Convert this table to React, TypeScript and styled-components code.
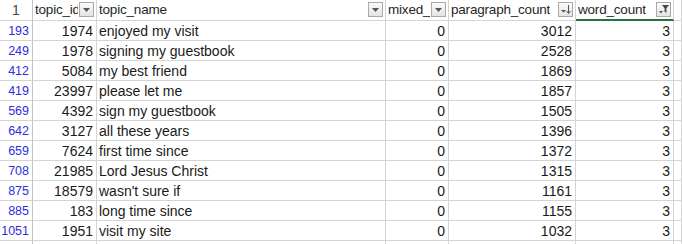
import styled, { createGlobalStyle } from 'styled-components'

const GlobalStyle = createGlobalStyle`
  html, body {
    margin: 0;
    padding: 0;
    background: #ffffff;
  }
  body {
    font-family: "Liberation Sans", Arial, sans-serif;
    overflow: hidden;
  }
`

const Sheet = styled.div`
  display: grid;
  grid-template-columns: 33px 64px 289px 63px 127px 98px 1fr;
  grid-auto-rows: 20px;
  grid-template-rows: 21px;
  width: 682px;
  height: 244px;
  overflow: hidden;
  font-size: 14px;
  color: #1a1a1a;
`

const Cell = styled.div<{ $align?: 'left' | 'right' }>`
  position: relative;
  box-sizing: border-box;
  border-right: 1px solid #d4d4d4;
  border-bottom: 1px solid #d4d4d4;
  padding: 0 3px 0 2px;
  display: flex;
  align-items: center;
  justify-content: ${(p) => (p.$align === 'right' ? 'flex-end' : 'flex-start')};
  white-space: nowrap;
  overflow: hidden;
`

const RowNum = styled(Cell)<{ $head?: boolean }>`
  border-right-color: #c4c4c4;
  color: ${(p) => (p.$head ? '#444444' : '#2e2ee0')};
  font-size: ${(p) => (p.$head ? '14px' : '12.5px')};
  justify-content: ${(p) => (p.$head ? 'center' : 'flex-end')};
  padding: 0 ${(p) => (p.$head ? '0' : '3px')} 0 0;
`

const HeadCell = styled(Cell)<{ $active?: boolean }>`
  color: #262626;
  font-size: 13.5px;
  letter-spacing: -0.2px;
  padding-right: 0;
  ${(p) => p.$active && `border-bottom: 2px solid #217346;`}
`

const HeadText = styled.span`
  overflow: hidden;
  max-width: calc(100% - 18px);
  padding-bottom: 1px;
`

const FilterBtn = styled.span`
  position: absolute;
  right: 2px;
  top: 2px;
  width: 15px;
  height: 15px;
  box-sizing: border-box;
  border: 1px solid #a9a9a9;
  background: linear-gradient(#fbfbfb, #e3e3e3);
  display: flex;
  align-items: center;
  justify-content: center;
`

type Kind = 'plain' | 'sort' | 'filter'

function FilterIcon({ kind }: { kind: Kind }) {
  if (kind === 'sort') {
    return (
      <svg width="13" height="13" viewBox="0 0 13 13">
        <path d="M2 7h5l-2.5 2.5z" fill="#555" />
        <path d="M9.5 2v8" stroke="#555" strokeWidth="1" />
        <path d="M7.5 8l2 2.5 2-2.5" stroke="#555" strokeWidth="1" fill="none" />
      </svg>
    )
  }
  if (kind === 'filter') {
    return (
      <svg width="13" height="13" viewBox="0 0 13 13">
        <path d="M2 8h4l-2 2.5z" fill="#555" />
        <path d="M5 2h7l-2.6 3.2v4.6l-1.8-1v-3.6z" fill="#444" />
      </svg>
    )
  }
  return (
    <svg width="13" height="13" viewBox="0 0 13 13">
      <path d="M3 5h7l-3.5 4z" fill="#555" />
    </svg>
  )
}

const headers: { label: string; kind: Kind; active?: boolean }[] = [
  { label: 'topic_id', kind: 'plain' },
  { label: 'topic_name', kind: 'plain' },
  { label: 'mixed_case', kind: 'plain' },
  { label: 'paragraph_count', kind: 'sort' },
  { label: 'word_count', kind: 'filter', active: true },
]

const rows: [number, number, string, number, number, number][] = [
  [193, 1974, 'enjoyed my visit', 0, 3012, 3],
  [249, 1978, 'signing my guestbook', 0, 2528, 3],
  [412, 5084, 'my best friend', 0, 1869, 3],
  [419, 23997, 'please let me', 0, 1857, 3],
  [569, 4392, 'sign my guestbook', 0, 1505, 3],
  [642, 3127, 'all these years', 0, 1396, 3],
  [659, 7624, 'first time since', 0, 1372, 3],
  [708, 21985, 'Lord Jesus Christ', 0, 1315, 3],
  [875, 18579, "wasn't sure if", 0, 1161, 3],
  [885, 183, 'long time since', 0, 1155, 3],
  [1051, 1951, 'visit my site', 0, 1032, 3],
  [0, 0, '', 0, 0, 0],
]

export default function App() {
  return (
    <>
      <GlobalStyle />
      <Sheet>
        <RowNum $head>1</RowNum>
        {headers.map((h) => (
          <HeadCell key={h.label} $active={h.active}>
            <HeadText>{h.label}</HeadText>
            <FilterBtn>
              <FilterIcon kind={h.kind} />
            </FilterBtn>
          </HeadCell>
        ))}
        <Cell />
        {rows.map((r, i) => {
          const blank = r[0] === 0
          return [
            <RowNum key={`n${i}`}>{blank ? '' : r[0]}</RowNum>,
            <Cell key={`a${i}`} $align="right">{blank ? '' : r[1]}</Cell>,
            <Cell key={`b${i}`}>{r[2]}</Cell>,
            <Cell key={`c${i}`} $align="right">{blank ? '' : r[3]}</Cell>,
            <Cell key={`d${i}`} $align="right">{blank ? '' : r[4]}</Cell>,
            <Cell key={`e${i}`} $align="right">{blank ? '' : r[5]}</Cell>,
            <Cell key={`f${i}`} />,
          ]
        })}
      </Sheet>
    </>
  )
}
